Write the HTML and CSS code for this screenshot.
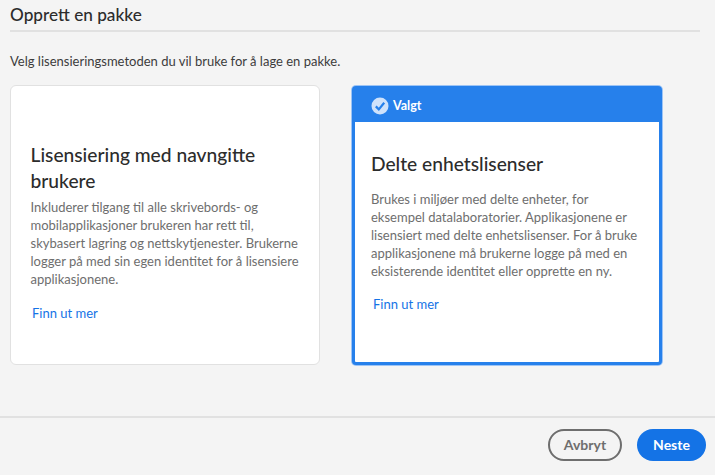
FILE: index.html
```html
<!DOCTYPE html>
<html lang="nb">
<head>
  <meta charset="UTF-8">
  <meta name="viewport" content="width=device-width, initial-scale=1.0">
  <link rel="stylesheet" href="styles.css">
  <title>Opprett en pakke</title>
</head>
<body>
  <div class="main">
    <h1 class="title">Opprett en pakke</h1>
    <p class="intro">Velg lisensieringsmetoden du vil bruke for å lage en pakke.</p>

    <div class="cards">
      <div class="card">
        <div class="card-body">
          <h2>Lisensiering med navngitte brukere</h2>
          <p>Inkluderer tilgang til alle skrivebords- og<br>mobilapplikasjoner brukeren har rett til,<br>skybasert lagring og nettskytjenester. Brukerne<br>logger på med sin egen identitet for å lisensiere<br>applikasjonene.</p>
          <a href="#" class="more">Finn ut mer</a>
        </div>
      </div>

      <div class="card selected">
        <div class="selected-bar">
          <svg class="check" width="18" height="18" viewBox="0 0 18 18">
            <circle cx="9" cy="9" r="8.5" fill="#cfe2fb"/>
            <path d="M4.8 9.4 L7.8 12.4 L13.2 5.8" fill="none" stroke="#2680eb" stroke-width="2.2"/>
          </svg>
          <span>Valgt</span>
        </div>
        <div class="card-body">
          <h2>Delte enhetslisenser</h2>
          <p>Brukes i miljøer med delte enheter, for<br>eksempel datalaboratorier. Applikasjonene er<br>lisensiert med delte enhetslisenser. For å bruke<br>applikasjonene må brukerne logge på med en<br>eksisterende identitet eller opprette en ny.</p>
          <a href="#" class="more">Finn ut mer</a>
        </div>
      </div>
    </div>
  </div>

  <div class="footer">
    <button type="button" class="btn-cancel">Avbryt</button>
    <button type="button" class="btn-next">Neste</button>
  </div>
</body>
</html>
```

FILE: styles.css
```css
* {
  margin: 0;
  padding: 0;
  box-sizing: border-box;
}

html, body {
  height: 475px;
  overflow: hidden;
}

body {
  background-color: #f4f4f4;
  font-family: Lato, "Open Sans", sans-serif;
  color: #2c2c2c;
}

.main {
  height: 418px;
  padding: 0 15px 0 10px;
  border-bottom: 2px solid #e1e1e1;
}

.title {
  height: 32px;
  padding-top: 1px;
  font-size: 17.2px;
  font-weight: 500;
  line-height: 28px;
  border-bottom: 2px solid #e1e1e1;
}

.intro {
  margin-top: 20px;
  font-size: 13px;
  line-height: 18px;
  white-space: nowrap;
  color: #3c3c3c;
}

.cards {
  display: flex;
  gap: 32px;
  margin-top: 15px;
}

.card {
  width: 310px;
  height: 280px;
  background-color: #fff;
  border: 1px solid #e1e1e1;
  border-radius: 6px;
  display: flex;
  flex-direction: column;
}

.card-body {
  flex: 1;
  padding: 56px 20px 0 19.5px;
}

.card h2 {
  font-size: 19.2px;
  font-weight: 500;
  line-height: 26px;
  color: #2c2c2c;
}

.card p {
  margin-top: 4px;
  font-size: 13px;
  line-height: 18px;
  white-space: nowrap;
  color: #6e6e6e;
}

.more {
  display: block;
  margin: 16px 0 0 1.5px;
  font-size: 13px;
  line-height: 18px;
  color: #1473e6;
  text-decoration: none;
}

.selected {
  margin-top: 1px;
  height: 279px;
  border: 3px solid #2680eb;
  border-radius: 4px;
  box-shadow: 0 0 0 1px #9dc4f5;
}

.selected-bar {
  display: flex;
  align-items: center;
  gap: 4px;
  height: 33px;
  padding-left: 16px;
  background-color: #2680eb;
  color: #fff;
  font-size: 12.5px;
  font-weight: 700;
}

.selected .card-body {
  padding: 29px 18px 0 16px;
}

.selected .card-body p {
  margin-top: 13px;
}

.selected .more {
  margin-top: 15px;
  margin-left: 2px;
}

.footer {
  display: flex;
  justify-content: flex-end;
  align-items: center;
  gap: 15px;
  height: 57px;
  padding: 0 9px 4px 0;
}

button {
  height: 32px;
  border-radius: 16px;
  font-family: Lato, sans-serif;
  font-size: 14px;
  font-weight: 700;
}

.btn-cancel {
  width: 74px;
  background-color: transparent;
  border: 2px solid #6e6e6e;
  color: #6e6e6e;
}

.btn-next {
  width: 69px;
  background-color: #1473e6;
  border: 0;
  color: #fff;
}
```
